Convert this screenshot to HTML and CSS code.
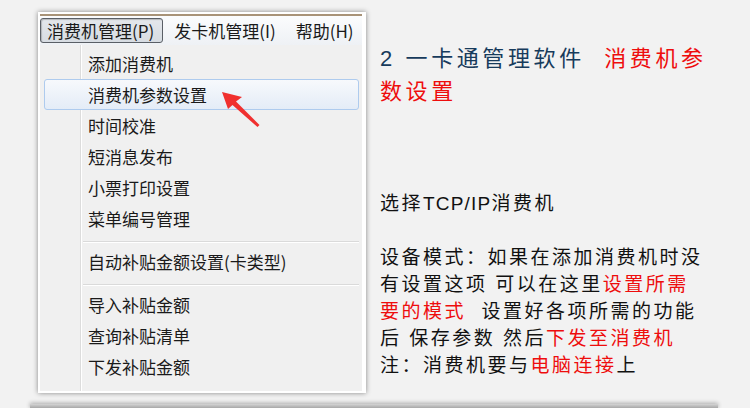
FILE: index.html
```html
<!DOCTYPE html>
<html lang="zh-CN">

<head>
	<meta charset="UTF-8">
	<title>消费机参数设置</title>
	<link rel="stylesheet" href="styles.css">
</head>

<body>
	<div class="page">
		<div class="shot">
			<div class="menubar">
				<span class="top-item active">消费机管理(P)</span>
				<span class="top-item">发卡机管理(I)</span>
				<span class="top-item">帮助(H)</span>
			</div>
			<ul class="dropdown">
				<li>添加消费机</li>
				<li class="hover">消费机参数设置</li>
				<li>时间校准</li>
				<li>短消息发布</li>
				<li>小票打印设置</li>
				<li>菜单编号管理</li>
				<li class="sep"></li>
				<li>自动补贴金额设置(卡类型)</li>
				<li class="sep"></li>
				<li>导入补贴金额</li>
				<li>查询补贴清单</li>
				<li>下发补贴金额</li>
			</ul>
			<!-- 红色箭头 -->
			<svg class="arrow" width="50" height="46" viewBox="0 0 50 46">
				<polygon points="7,7 27,12 21,16.5 44.5,40 42.5,42 17.5,20 13,24" fill="#f0302f" />
			</svg>
		</div>
		<div class="notes">
			<h2 class="title">2 一卡通管理软件&nbsp; <span class="red">消费机参</span><br><span class="red">数设置</span></h2>
			<p class="desc">
				选择<span class="latin">TCP/IP</span>消费机<br>
				<br>
				设备模式：如果在添加消费机时没<br>
				有设置这项 可以在这里<span class="red">设置所需</span><br>
				<span class="red">要的模式</span>&nbsp; 设置好各项所需的功能<br>
				后 保存参数 然后<span class="red">下发至消费机</span><br>
				注：消费机要与<span class="red">电脑连接</span>上
			</p>
		</div>
	</div>
	<div class="next-panel"></div>
</body>

</html>
```

FILE: styles.css
```css
body,
div,
ul,
li,
h2,
p {
	margin: 0;
	padding: 0;
}

ul {
	list-style-type: none;
}

body {
	background: #f2f2f2;
	overflow: hidden;
	font-family: "Liberation Sans", "Noto Sans CJK SC", sans-serif;
}

.page {
	display: flex;
	padding: 12px 0 0 38px;
}

/* 左边的软件截图 */
.shot {
	position: relative;
	width: 322px;
	height: 376px;
	background: #fff;
	padding: 2px 4px 3px 2px;
	box-shadow: 0 0 5px rgba(0, 0, 0, 0.45);
	font-family: "Noto Sans CJK SC", sans-serif;
	font-size: 17px;
	color: #1a1a1a;
}

.menubar {
	display: flex;
	height: 27px;
	padding-top: 2px;
	border-top: 2px solid #a89378;
	background: linear-gradient(#fbfcfd, #eef1f5);
	white-space: nowrap;
}

.top-item {
	flex-shrink: 0;
	height: 23px;
	line-height: 23px;
	padding: 0 6px;
	margin-right: 6px;
	border: 1px solid transparent;
	border-radius: 3px;
}

.top-item.active {
	padding-right: 8px;
	margin-right: 4px;
	border-color: #5a5f66;
	background: linear-gradient(#e4e7eb, #d7dce2);
	box-shadow: inset 1px 1px 1px rgba(0, 0, 0, 0.2);
}

.dropdown {
	height: 337px;
	padding: 3px 0 6px;
	background: linear-gradient(to right, #f0f0f0 40px, #dcdcdc 40px, #dcdcdc 41px, #fff 41px, #fff 42px, #f0f0f0 42px);
}

.dropdown li {
	box-sizing: border-box;
	height: 31px;
	line-height: 29px;
	margin: 0 3px 0 4px;
	padding-left: 43px;
	border: 1px solid transparent;
	border-radius: 3px;
}

.dropdown li.hover {
	border-color: #aecbee;
	background: linear-gradient(#f7f9fc, #e4ecf7);
}

.dropdown li.sep {
	height: 2px;
	margin: 7px 3px 3px 43px;
	padding: 0;
	border: 0;
	border-top: 1px solid #dadada;
	border-bottom: 1px solid #fff;
	border-radius: 0;
}

.arrow {
	position: absolute;
	left: 177px;
	top: 73px;
}

/* 右边的说明文字 */
.notes {
	margin: 30px 0 0 14px;
	white-space: nowrap;
}

.title {
	font-size: 22px;
	font-weight: normal;
	line-height: 33px;
	letter-spacing: 3.6px;
	color: #173b5c;
}

.desc {
	margin-top: 82px;
	font-size: 19px;
	line-height: 27px;
	letter-spacing: 2.5px;
	color: #111;
}

.desc .latin {
	letter-spacing: 1.2px;
}

.red {
	color: #ee0d0d;
}

.next-panel {
	width: 688px;
	height: 5px;
	margin: 11px 0 0 30px;
	background: linear-gradient(#d4d4d4, #9c9c9c);
	box-shadow: 0 -1px 4px rgba(0, 0, 0, 0.3);
}
```
